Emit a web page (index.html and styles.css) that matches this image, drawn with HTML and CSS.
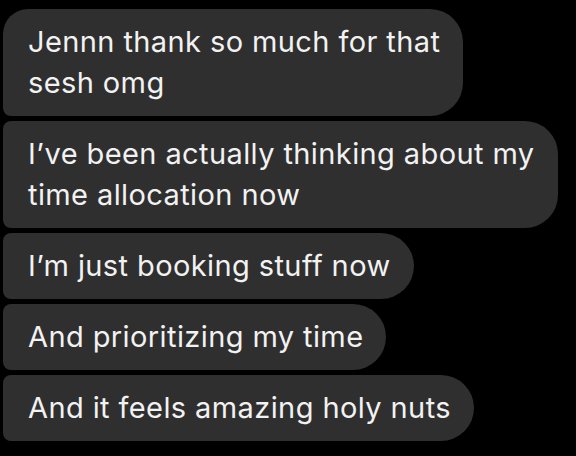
FILE: index.html
```html
<!DOCTYPE html>
<html lang="en">
<head>
    <meta charset="UTF-8">
    <meta name="viewport" content="width=device-width, initial-scale=1.0">
    <title>Messages</title>
    <link rel="stylesheet" href="styles.css">
</head>
<body>
    <div class="thread">
        <div class="bubble first">Jennn thank so much for that<br>sesh omg</div>
        <div class="bubble">I’ve been actually thinking about my<br>time allocation now</div>
        <div class="bubble">I’m just booking stuff now</div>
        <div class="bubble">And prioritizing my time</div>
        <div class="bubble">And it feels amazing holy nuts</div>
    </div>
</body>
</html>
```

FILE: styles.css
```css
* {
    box-sizing: border-box;
}
body {
    margin: 0;
    background: #000;
    font-family: 'Inter', 'Liberation Sans', sans-serif;
}
.thread {
    display: flex;
    flex-direction: column;
    align-items: flex-start;
    gap: 5px;
    padding: 9px 0 0 3px;
}
.bubble {
    background: #2f2f2f;
    color: #f2f2f2;
    font-size: 29px;
    letter-spacing: 0.4px;
    line-height: 41px;
    padding: 12px 23px 13px 25px;
    border-radius: 8px 33px 33px 8px;
    white-space: nowrap;
}
.bubble.first {
    border-top-left-radius: 25px;
}
```
